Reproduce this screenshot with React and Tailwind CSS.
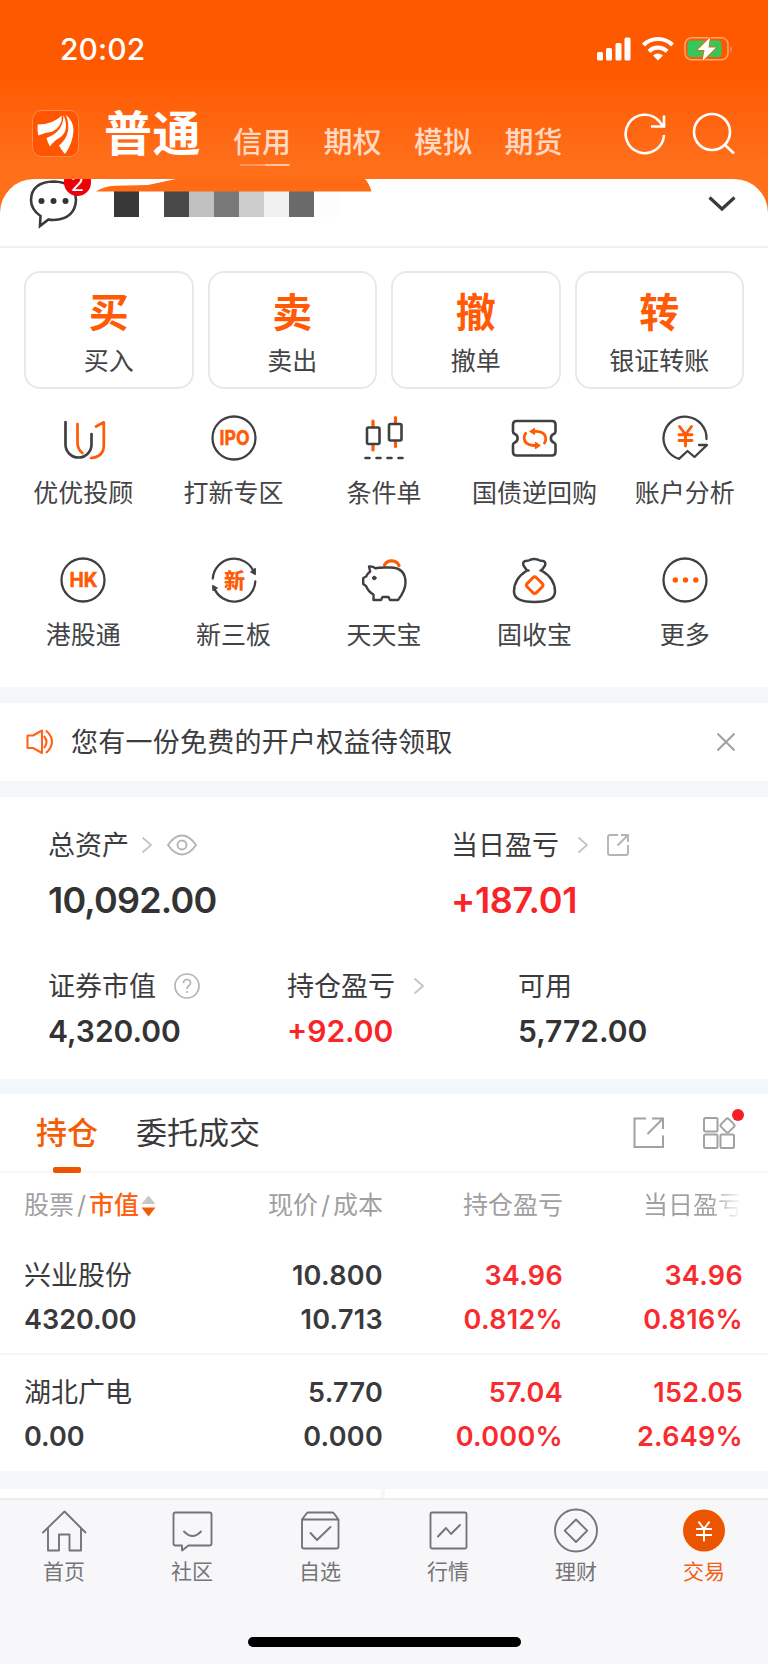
import React from 'react';

const DARK = '#404042';
const ORANGE = '#ff5a05';

const actions = [
  { mark: '买', label: '买入' },
  { mark: '卖', label: '卖出' },
  { mark: '撤', label: '撤单' },
  { mark: '转', label: '银证转账' },
];

const holdings = [
  {
    name: '兴业股份', value: '4320.00', price: '10.800', cost: '10.713',
    profit: '34.96', profitRate: '0.812%', day: '34.96', dayRate: '0.816%',
  },
  {
    name: '湖北广电', value: '0.00', price: '5.770', cost: '0.000',
    profit: '57.04', profitRate: '0.000%', day: '152.05', dayRate: '2.649%',
  },
];

const ToolSvg = ({ children }) => (
  <svg width="48" height="48" viewBox="0 0 48 48" fill="none" stroke={DARK} strokeWidth="2.3" strokeLinecap="round" strokeLinejoin="round">
    {children}
  </svg>
);

const tools = [
  {
    label: '优优投顾',
    icon: (
      <ToolSvg>
        <path d="M6.5 8V30.500a13 13 0 0 0 26 0V20" strokeWidth="2.700" />
        <g stroke={ORANGE} strokeWidth="2.700">
          <path d="M18.500 10V28.500q0 7 5 10.500" />
          <path d="M37 12.500L44.800 8.300V31q0 12-12.800 13" />
        </g>
      </ToolSvg>
    ),
  },
  {
    label: '打新专区',
    icon: (
      <ToolSvg>
        <circle cx="24" cy="24" r="21.500" />
        <text x="24.500" y="31" textAnchor="middle" stroke={ORANGE} strokeWidth="0.5" fill={ORANGE} fontSize="20" fontWeight="700" textLength="30" lengthAdjust="spacingAndGlyphs">IPO</text>
      </ToolSvg>
    ),
  },
  {
    label: '条件单',
    icon: (
      <ToolSvg>
        <path d="M13 7v5M13 31.500v4.500M35.500 3.500v5M35.500 28v4.500" stroke={ORANGE} strokeWidth="3.200" />
        <rect x="7" y="13.500" width="12.500" height="16.500" rx="1.500" strokeWidth="2.600" />
        <rect x="29" y="10" width="12.500" height="16.500" rx="1.500" strokeWidth="2.600" />
        <path d="M5.500 44h4M16.500 44h4M27.500 44h4M38.500 44h4" strokeWidth="2.600" />
      </ToolSvg>
    ),
  },
  {
    label: '国债逆回购',
    icon: (
      <ToolSvg>
        <path d="M6.500 7h35.500q3.500 0 3.500 3.500v7q0 1.500-1.500 2.200a4.800 4.800 0 0 0 0 9q1.500.8 1.500 2.300v7q0 3.500-3.500 3.500H6.500q-3.500 0-3.500-3.500v-7q0-1.500 1.500-2.300a4.800 4.800 0 0 0 0-9q-1.500-.7-1.500-2.200v-7Q3 7 6.500 7z" strokeWidth="2.600" />
        <g stroke={ORANGE} strokeWidth="2.800">
          <path d="M24 17.300h2.500q9.300.5 9.300 7.700 0 2-1.300 4" />
          <path d="M26 31.500h-2.500q-9.300-.5-9.300-7.700 0-2.500 1.500-4.500" />
          <path d="M24.500 14.500v5.800l-4.500-2.900zM25.500 28.600v5.800l4.500-2.900z" fill={ORANGE} strokeWidth="1.200" />
        </g>
      </ToolSvg>
    ),
  },
  {
    label: '账户分析',
    icon: (
      <ToolSvg>
        <path d="M45.500 25A21.500 21.500 0 1 0 18 44.800L26.500 37l7 6L46 31h-8" />
        <path d="M18.500 12.500l6 8 6-8M24.500 20.500V32M18 20.800h13M18 26.500h13" stroke={ORANGE} strokeWidth="2.900" />
      </ToolSvg>
    ),
  },
  {
    label: '港股通',
    icon: (
      <ToolSvg>
        <circle cx="24" cy="24" r="21.500" />
        <text x="24.500" y="31" textAnchor="middle" stroke={ORANGE} strokeWidth="0.5" fill={ORANGE} fontSize="19.500" fontWeight="700" textLength="28" lengthAdjust="spacingAndGlyphs">HK</text>
      </ToolSvg>
    ),
  },
  {
    label: '新三板',
    icon: (
      <ToolSvg>
        <path d="M2.800 22.500A21.300 21.300 0 0 1 44 16.500M45.300 25.500A21.300 21.300 0 0 1 4 31.500" />
        <path d="M40.800 16l4.500 2.500V12.500zM7.200 32l-4.500-2.500L3 34.500z" fill={DARK} strokeWidth="1.200" />
        <text x="24.500" y="31.500" textAnchor="middle" stroke="none" fill={ORANGE} fontSize="21" fontWeight="900">新</text>
      </ToolSvg>
    ),
  },
  {
    label: '天天宝',
    icon: (
      <ToolSvg>
        <path d="M24.500 9a8 7.500 0 0 1 14.500 0.500" stroke={ORANGE} strokeWidth="3.200" />
        <path d="M9 10.500q3.500-.5 6.500 1.800Q18 11.500 25 11.500h5q15.500 0 15.500 15 0 8-7.500 17.500h-8l-1.500-3h-6l-1.500 3H13.500v-5.500q-5-2.500-7.500-8.500l-2.800-2v-6l3-1.500q1.200-3 4-5z" strokeWidth="2.400" />
        <circle cx="14.300" cy="22" r="1.800" fill={DARK} strokeWidth="1" />
      </ToolSvg>
    ),
  },
  {
    label: '固收宝',
    icon: (
      <ToolSvg>
        <path d="M17 14.500l-3.500-5Q12 5 17 4.800q2 .2 3-1 4-1.800 8.500 0 1 1.200 3 1 5 .2 3.500 4.700l-3.500 5Q45 22.500 45 35.500q0 10.500-20.500 10.500T4 35.500Q4 22.500 17 14.500zM17 14.500h1.500M30.500 14.500H32" strokeWidth="2.500" />
        <rect x="18.200" y="22.700" width="13" height="13" rx="2.500" transform="rotate(45 24.700 29.200)" stroke={ORANGE} strokeWidth="3" />
      </ToolSvg>
    ),
  },
  {
    label: '更多',
    icon: (
      <ToolSvg>
        <circle cx="24" cy="24" r="21.500" />
        <g fill={ORANGE} stroke="none">
          <circle cx="14.300" cy="24" r="2.700" />
          <circle cx="24.500" cy="24" r="2.700" />
          <circle cx="34.800" cy="24" r="2.700" />
        </g>
      </ToolSvg>
    ),
  },
];

const NavSvg = ({ children }) => (
  <svg width="48" height="48" viewBox="0 0 48 48" fill="none" stroke="#757577" strokeWidth="1.900" strokeLinejoin="round" strokeLinecap="round">
    {children}
  </svg>
);

const navItems = [
  {
    label: '首页',
    icon: (
      <NavSvg>
        <path d="M3 25.500L24.500 4.500 45.500 25.500M8 21V43.500H19V27.500H29.500V43.500H41V21" />
      </NavSvg>
    ),
  },
  {
    label: '社区',
    icon: (
      <NavSvg>
        <path d="M7.500 5.500h34q2 0 2 2v29q0 2-2 2H20.500l-6.500 5v-5H7.500q-2 0-2-2v-29q0-2 2-2z" />
        <path d="M16 24.500q8.500 9 17 0" />
      </NavSvg>
    ),
  },
  {
    label: '自选',
    icon: (
      <NavSvg>
        <path d="M6 12.500h36.500v27q0 2-2 2H8q-2 0-2-2zM6 12.500l4.500-6q.8-1 2-1h23.500q1.200 0 2 1l4.500 6" />
        <path d="M14.500 26l6.500 7L34.500 20" />
      </NavSvg>
    ),
  },
  {
    label: '行情',
    icon: (
      <NavSvg>
        <rect x="6.500" y="5.500" width="36" height="36" rx="1.500" />
        <path d="M14 29.500l8-8.500 5 6L36 18" />
      </NavSvg>
    ),
  },
  {
    label: '理财',
    icon: (
      <NavSvg>
        <circle cx="24" cy="23.500" r="21" />
        <path d="M24 12.500L35.200 23.700 24 35 12.700 23.700z" />
      </NavSvg>
    ),
  },
  {
    label: '交易',
    active: true,
    icon: (
      <NavSvg>
        <circle cx="24" cy="23.500" r="21" fill="#ec5500" stroke="none" />
        <path d="M18.500 14.500l5.500 7.500 5.500-7.500M24 22v12.500M16 22h16M16 28h16" stroke="#fff" strokeWidth="2" strokeLinecap="butt" />
      </NavSvg>
    ),
  },
];

const Arrow = () => (
  <svg className="shrink-0" width="12" height="18" viewBox="0 0 12 18" fill="none" stroke="#c4c4c6" strokeWidth="1.800">
    <path d="M1.500 1.500L10 9 1.500 16.500" />
  </svg>
);

const StatusBar = () => (
  <div className="flex h-[98px] items-center justify-between pl-[60px] pr-[34px]">
    <span className="text-[30px] font-medium leading-[40px] tracking-[0.1px] text-white">20:02</span>
    <div className="flex items-center">
      <svg width="34" height="24" viewBox="0 0 34 24" fill="#fff">
        <rect x="0" y="15" width="6" height="8.500" rx="1.500" />
        <rect x="9" y="11" width="6" height="12.500" rx="1.500" />
        <rect x="18.500" y="6" width="6" height="17.500" rx="1.500" />
        <rect x="27.500" y="0.500" width="6" height="23" rx="1.500" />
      </svg>
      <svg className="ml-[10px]" width="34" height="26" viewBox="0 0 34 26" fill="none" stroke="#fff" strokeWidth="4.200">
        <path d="M2.500 9a20.500 20.500 0 0 1 29 0" />
        <path d="M8 15.500a12.500 12.500 0 0 1 18 0" />
        <path d="M17 24.500l-5-5a7.500 7.500 0 0 1 10 0z" fill="#fff" stroke="none" />
      </svg>
      <svg className="ml-[9px]" width="50" height="26" viewBox="0 0 50 26">
        <rect x="1" y="1.800" width="43" height="22" rx="6.500" fill="none" stroke="#fff" strokeOpacity="0.450" strokeWidth="1.500" />
        <rect x="3.500" y="4.500" width="34" height="16.500" rx="3.500" fill="#34c759" />
        <path d="M46.500 9.500q2.500 3.500 0 7z" fill="#fff" fillOpacity="0.500" />
        <path d="M26 1.500L13.500 14h7L18.500 25 32 11.500H24.500z" fill="#fff" stroke="#ff5a00" strokeWidth="1.500" strokeLinejoin="round" paintOrder="stroke" />
      </svg>
    </div>
  </div>
);

const TopNav = () => (
  <div className="flex h-[81px] items-start pl-8">
    <svg className="mt-3" width="47" height="47" viewBox="0 0 47 47">
      <rect x="0.500" y="0.500" width="46" height="46" rx="9" fill="#ff5500" stroke="#ff8a4d" />
      <g fill="#fff">
        <path d="M5.700 14.500Q21 14.500 29.800 5.500 30.500 17 20 21.800 13.500 22.500 6.300 25.500q-1.300-5-.6-11z" />
        <path d="M31.500 5q6.500 15.500-3.500 22.500-6 3-10 9-2.500-4-3.500-8.500Q31.500 22 31.500 5z" />
        <path d="M34 5q8 6.500 7.500 16-1 13-8.500 23-3.500-3.500-6-8.500Q41 24 34 5z" />
      </g>
    </svg>
    <span className="ml-[25px] mt-[3px] text-[48px] font-bold leading-[66px] tracking-[0.5px] text-white">普通</span>
    <div className="ml-8 mt-[20px] flex gap-[32.5px] text-[29px] font-medium leading-[49px] text-white/75">
      <div className="relative">
        信用
        <span className="absolute left-[7px] top-[46px] h-[2px] w-[50px] rounded-full bg-linear-to-r from-white/30 from-50% to-white/60 to-50%" />
      </div>
      <div>期权</div>
      <div>模拟</div>
      <div>期货</div>
    </div>
    <svg className="ml-[61px] mt-[14px]" width="44" height="44" viewBox="0 0 44 44" fill="none" stroke="#fff" strokeWidth="2.600">
      <path d="M40 23A19.200 19.200 0 1 1 35 9L39 14" />
      <path d="M27 14.500H40V3.500" />
    </svg>
    <svg className="ml-[23px] mt-[13px]" width="44" height="44" viewBox="0 0 44 44" fill="none" stroke="#fff" strokeWidth="2.600">
      <circle cx="21" cy="21" r="18" />
      <path d="M33.500 33.500L43 42.500" />
    </svg>
  </div>
);

const mosaic = ['bg-[#383838]', 'bg-white', 'bg-[#484848]', 'bg-[#c0c0c0]', 'bg-[#787878]', 'bg-[#cdcdcd]', 'bg-[#f1f1f1]', 'bg-[#6a6a6a]', 'bg-[#fdfdfd]'];

const AccountBar = () => (
  <div className="relative flex h-[69px] items-start overflow-hidden rounded-t-[34px] border-b-2 border-[#f1f1f2] bg-white">
    <svg className="ml-[29px]" width="50" height="50" viewBox="0 0 50 50" fill="none" stroke="#3a3a3a" strokeWidth="2.600">
      <path d="M11.500 37Q2 30.500 2 21 2.500 3 24.500 2.500 46.500 3 47 21 46 40 24.500 41q-3 0-5-.5L11 47z" />
      <g fill="#333" stroke="none">
        <circle cx="12.500" cy="22" r="3" />
        <circle cx="24.500" cy="22" r="3" />
        <circle cx="36.500" cy="22" r="3" />
      </g>
    </svg>
    <span className="absolute left-[64px] top-[-11px] h-[28px] w-[27px] rounded-full bg-[#ee0008] text-center text-[22px] leading-[31px] text-white">2</span>
    {/* brush mark over the account name */}
    <svg className="absolute left-[94px] top-0" width="280" height="13" viewBox="0 0 280 13">
      <path d="M2 12.500Q9 7.500 22 6.800L54 6Q68 3 82 0H271q4 4 6.500 12.500z" fill="#ff6b14" />
    </svg>
    <div className="ml-[34.5px] mt-3 flex">
      {mosaic.map((tone, i) => (
        <span key={i} className={`h-[26px] w-[25.1px] ${tone}`} />
      ))}
    </div>
    <svg className="ml-auto mr-[31px] mt-4" width="30" height="18" viewBox="0 0 30 18" fill="none" stroke="#3a3a3a" strokeWidth="3.200">
      <path d="M2.500 2.500L15 14 27.500 2.500" />
    </svg>
  </div>
);

const Summary = () => (
  <section className="h-[282px] bg-white pl-[48px] text-[#3c3c3e]">
    <div className="flex pt-[28px]">
      <div className="w-[403px]">
        <div className="flex h-10 items-center text-[27px]">
          <span className="mt-[2px]">总资产</span>
          <span className="ml-3 flex"><Arrow /></span>
          <svg className="ml-[14px]" width="30" height="22" viewBox="0 0 30 22" fill="none" stroke="#b4b4b6" strokeWidth="1.900">
            <path d="M1 11Q7.500 1.500 15 1.500T29 11Q22.500 20.500 15 20.500T1 11z" />
            <circle cx="15" cy="11" r="4.500" />
          </svg>
        </div>
        <div className="mt-[13px] text-[36px] font-semibold leading-[44px] tracking-[-0.8px] text-[#333]">10,092.00</div>
      </div>
      <div>
        <div className="flex h-10 items-center text-[27px]">
          <span className="mt-[2px]">当日盈亏</span>
          <span className="ml-[18px] flex"><Arrow /></span>
          <svg className="ml-[17px]" width="24" height="24" viewBox="0 0 24 24" fill="none" stroke="#b4b4b6" strokeWidth="1.900">
            <path d="M12 2H4Q2 2 2 4V20Q2 22 4 22H20Q22 22 22 20V12" />
            <path d="M15 2H22V9M22 2L11.500 12.500" />
          </svg>
        </div>
        <div className="mt-[13px] text-[36px] font-semibold leading-[44px] tracking-[-0.3px] text-[#f82428]">+187.01</div>
      </div>
    </div>
    <div className="mt-[44px] flex">
      <div className="w-[239px]">
        <div className="flex h-10 items-center text-[27px]">
          <span className="mt-[2px]">证券市值</span>
          <svg className="ml-[18px]" width="26" height="26" viewBox="0 0 26 26" fill="none" stroke="#b4b4b6" strokeWidth="1.700">
            <circle cx="13" cy="13" r="12" />
            <path d="M9.500 10.200q0-3.700 3.500-3.700t3.500 3.300q0 1.600-1.800 2.900T13 16M13 18v2" />
          </svg>
        </div>
        <div className="mt-[6px] text-[30px] font-semibold leading-[38px] text-[#333]">4,320.00</div>
      </div>
      <div className="w-[231px]">
        <div className="flex h-10 items-center text-[27px]">
          <span className="mt-[2px]">持仓盈亏</span>
          <span className="ml-[18px] flex"><Arrow /></span>
        </div>
        <div className="mt-[6px] text-[30px] font-semibold leading-[38px] text-[#f82428]">+92.00</div>
      </div>
      <div>
        <div className="flex h-10 items-center text-[27px]">
          <span className="mt-[2px]">可用</span>
        </div>
        <div className="mt-[6px] text-[30px] font-semibold leading-[38px] text-[#333]">5,772.00</div>
      </div>
    </div>
  </section>
);

const HoldingTabs = () => (
  <div className="flex h-[79px] items-center border-b-2 border-[#f6f6f7] bg-white pl-[36px]">
    <div className="relative text-[31px] font-medium leading-[80px] text-[#f55d05]">
      持仓
      <span className="absolute left-[17px] top-[74px] h-[6px] w-[28px] rounded-xs bg-[#ec5500]" />
    </div>
    <div className="ml-[38px] text-[31px] leading-[80px] text-[#3a3a3c]">委托成交</div>
    <svg className="ml-auto" width="32" height="32" viewBox="0 0 32 32" fill="none" stroke="#a2a2a4" strokeWidth="2">
      <path d="M13 1.500H1.500V30H30V18.500" />
      <path d="M19 1.500H30V12M30 1.500L14.500 17" />
    </svg>
    <div className="relative ml-[37px] mr-[32px]">
      <svg width="34" height="34" viewBox="0 0 34 34" fill="none" stroke="#a2a2a4" strokeWidth="2">
        <rect x="2" y="2" width="13.500" height="13.500" rx="1.500" />
        <rect x="2" y="18.500" width="13.500" height="13.500" rx="1.500" />
        <rect x="18.500" y="18.500" width="13.500" height="13.500" rx="1.500" />
        <rect x="20" y="4" width="11" height="11" rx="2" transform="rotate(45 25.500 9.500)" />
      </svg>
      <span className="absolute -right-[8px] -top-[7px] size-3 rounded-full bg-[#f52025]" />
    </div>
  </div>
);

const columns = 'grid grid-cols-[190px_169px_180px_180px] pl-6';

const Holdings = () => (
  <section className="bg-white">
    <div className={`${columns} h-[66px] items-center text-[25px] text-[#a0a0a2]`}>
      <div className="flex items-center">
        股票<span className="mx-[3px]">/</span><span className="font-medium text-[#ff6010]">市值</span>
        <svg className="ml-[2px]" width="15" height="22" viewBox="0 0 15 22">
          <path d="M7.500 0.500L14.500 9H0.500z" fill="#c6c6c8" />
          <path d="M7.500 21.500L14.500 12.500H0.500z" fill="#f55d05" />
        </svg>
      </div>
      <div className="text-right">现价<span className="mx-[3px]">/</span>成本</div>
      <div className="text-right">持仓盈亏</div>
      <div className="bg-linear-to-r from-[#a0a0a2] from-82% to-white to-99% bg-clip-text text-right text-transparent">当日盈亏</div>
    </div>
    {holdings.map((row, i) => (
      <div
        key={row.name}
        className={`${columns} h-[116px] text-[27px] font-semibold leading-[44px] tracking-[0.3px] text-[#3a3a3c] ${i === 0 ? 'border-b-2 border-[#f6f6f7] pt-[15px]' : 'pt-4'}`}
      >
        <div className="tracking-normal">
          <div className="font-normal">{row.name}</div>
          <div>{row.value}</div>
        </div>
        <div className="text-right">
          <div>{row.price}</div>
          <div>{row.cost}</div>
        </div>
        <div className="text-right text-[#f82c2f]">
          <div>{row.profit}</div>
          <div>{row.profitRate}</div>
        </div>
        <div className="text-right text-[#f82c2f]">
          <div>{row.day}</div>
          <div>{row.dayRate}</div>
        </div>
      </div>
    ))}
  </section>
);

const TabBar = () => (
  <nav className="h-[166px] border-t-2 border-[#ececee] bg-[#f7f7fa]">
    <div className="grid grid-cols-6 pt-[7px]">
      {navItems.map((item) => (
        <div key={item.label} className="flex flex-col items-center">
          {item.icon}
          <span className={`mt-[1px] text-[21px] leading-[31px] ${item.active ? 'text-[#f06010]' : 'text-[#757577]'}`}>{item.label}</span>
        </div>
      ))}
    </div>
    <div className="mx-auto mt-[50px] h-[10px] w-[273px] rounded-full bg-black" />
  </nav>
);

const App = () => {
  return (
    <div className="h-[1664px] w-[768px] overflow-hidden bg-[#f3f7f9] font-['Inter','Noto_Sans_CJK_SC',sans-serif]">
      {/* Header */}
      <header className="bg-linear-to-b from-[#ff5900] from-30% to-[#ff6e19] to-65%">
        <StatusBar />
        <TopNav />
        <AccountBar />
      </header>

      {/* Trade actions */}
      <section className="h-[439px] bg-white">
        <div className="grid grid-cols-4 gap-[14px] px-6 pt-[23px]">
          {actions.map((item) => (
            <div key={item.mark} className="h-[118px] rounded-2xl border-2 border-[#e8e8e9] pt-[15px] text-center">
              <div className="text-[40px] font-bold leading-[50px] text-[#ff5a05]">{item.mark}</div>
              <div className="mt-[6px] text-[25px] leading-[35px] text-[#444446]">{item.label}</div>
            </div>
          ))}
        </div>
        <div className="grid grid-cols-5 gap-y-[40px] px-2 pt-[25px]">
          {tools.map((tool) => (
            <div key={tool.label} className="flex flex-col items-center">
              {tool.icon}
              <span className="mt-[9px] text-[25px] leading-[45px] text-[#444446]">{tool.label}</span>
            </div>
          ))}
        </div>
      </section>

      {/* Notice */}
      <section className="mt-4 flex h-[78px] items-center bg-white pl-[26px] pr-[33px]">
        <svg width="28" height="26" viewBox="0 0 28 26" fill="none" stroke="#ff6418" strokeWidth="2.100" strokeLinejoin="round">
          <path d="M1.500 6.500H7L16 1.500V24L7 19H1.500z" />
          <path d="M18 7q5 6 0 12M20 1.500q12 11 0 22.500" />
        </svg>
        <span className="ml-[17px] mt-[2px] text-[27px] tracking-[0.250px] text-[#3c3c3e]">您有一份免费的开户权益待领取</span>
        <svg className="ml-auto" width="18" height="18" viewBox="0 0 18 18" stroke="#a0a0a0" strokeWidth="2">
          <path d="M0.500 0.500L17.500 17.500M17.500 0.500L0.500 17.500" />
        </svg>
      </section>

      {/* Assets */}
      <div className="mt-4">
        <Summary />
      </div>

      {/* Positions */}
      <div className="mt-[15px]">
        <HoldingTabs />
        <Holdings />
      </div>

      <div className="mt-[18px] flex h-[9px] gap-1">
        <div className="w-[381px] bg-white" />
        <div className="flex-1 bg-white" />
      </div>
      <TabBar />
    </div>
  );
};

export default App;
